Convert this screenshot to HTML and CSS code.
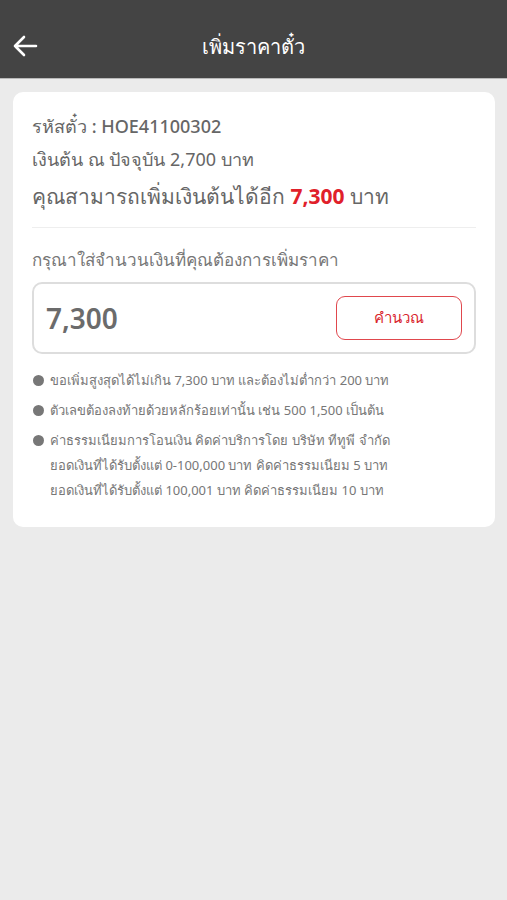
FILE: index.html
```html
<!DOCTYPE html>
<html lang="th">
<head>
    <meta charset="UTF-8">
    <meta name="viewport" content="width=device-width, initial-scale=1.0">
    <title>เพิ่มราคาตั๋ว</title>
    <link rel="stylesheet" href="styles.css">
</head>
<body>
    <header class="top-bar">
        <button class="back-btn" aria-label="back">
            <svg width="26" height="22" viewBox="0 0 26 22">
                <path d="M24 11H3M12 2L3 11l9 9" fill="none" stroke="#fff" stroke-width="2.6" stroke-linecap="round" stroke-linejoin="round"/>
            </svg>
        </button>
        <h1 class="title">เพิ่มราคาตั๋ว</h1>
    </header>

    <main class="card">
        <div class="ticket-info">
            <div class="info-line">รหัสตั๋ว : HOE41100302</div>
            <div class="info-line">เงินต้น ณ ปัจจุบัน 2,700 บาท</div>
            <div class="info-big">คุณสามารถเพิ่มเงินต้นได้อีก <span class="amount">7,300</span> บาท</div>
        </div>

        <div class="form">
            <div class="label">กรุณาใส่จำนวนเงินที่คุณต้องการเพิ่มราคา</div>
            <div class="input-box">
                <span class="input-value">7,300</span>
                <button class="calc-btn">คำนวณ</button>
            </div>
        </div>

        <ul class="notes">
            <li>ขอเพิ่มสูงสุดได้ไม่เกิน 7,300 บาท และต้องไม่ต่ำกว่า 200 บาท</li>
            <li>ตัวเลขต้องลงท้ายด้วยหลักร้อยเท่านั้น เช่น 500 1,500 เป็นต้น</li>
            <li>ค่าธรรมเนียมการโอนเงิน คิดค่าบริการโดย บริษัท ทีทูพี จำกัด<br>ยอดเงินที่ได้รับตั้งแต่ 0-100,000 บาท คิดค่าธรรมเนียม 5 บาท<br>ยอดเงินที่ได้รับตั้งแต่ 100,001 บาท คิดค่าธรรมเนียม 10 บาท</li>
        </ul>
    </main>
</body>
</html>
```

FILE: styles.css
```css
body {
    margin: 0;
    background-color: #ebebeb;
    font-family: "Noto Sans", "Liberation Sans", sans-serif;
    color: #666;
}

.top-bar {
    height: 78px;
    background-color: #444;
    border-bottom: 1px solid #b9b9b9;
    display: flex;
    align-items: center;
    justify-content: center;
    position: relative;
}

.back-btn {
    position: absolute;
    left: 12px;
    top: 35px;
    padding: 0;
    border: none;
    background: none;
}

.title {
    margin: 0;
    padding-top: 16px;
    color: #fff;
    font-size: 20px;
    font-weight: 500;
}

.card {
    margin: 13px 12px 0 13px;
    background-color: #fff;
    border-radius: 10px;
    padding: 18px 19px 24px 19px;
}

.ticket-info {
    border-bottom: 1px solid #eee;
    padding-bottom: 10px;
}

.info-line {
    font-size: 18px;
    line-height: 33px;
}

.info-line:first-child {
    font-weight: 500;
}

.info-big {
    font-size: 21px;
    font-weight: 500;
    line-height: 41px;
}

.amount {
    color: #e0202a;
    font-weight: 700;
}

.form {
    padding-top: 19px;
}

.label {
    font-size: 17px;
    color: #777;
    font-weight: 300;
    line-height: 26px;
}

.input-box {
    margin-top: 9px;
    height: 68px;
    border: 2px solid #ddd;
    border-radius: 10px;
    display: flex;
    align-items: center;
    justify-content: space-between;
    padding: 0 12px 0 12px;
}

.input-value {
    font-size: 28px;
    font-weight: 600;
    color: #6b6b6b;
}

.calc-btn {
    width: 126px;
    height: 44px;
    border: 1.5px solid #e0474d;
    border-radius: 9px;
    background: #fff;
    color: #d9262e;
    font-family: inherit;
    font-size: 15px;
}

.notes {
    list-style: none;
    margin: 14px 0 0 0;
    padding: 0;
}

.notes li {
    position: relative;
    padding-left: 18px;
    font-size: 13px;
    line-height: 25px;
    color: #777;
    margin-bottom: 5px;
}

.notes li:last-child {
    margin-bottom: 0;
}

.notes li::before {
    content: "";
    position: absolute;
    left: 1px;
    top: 7px;
    width: 11px;
    height: 11px;
    border-radius: 50%;
    background-color: #777;
}
```
